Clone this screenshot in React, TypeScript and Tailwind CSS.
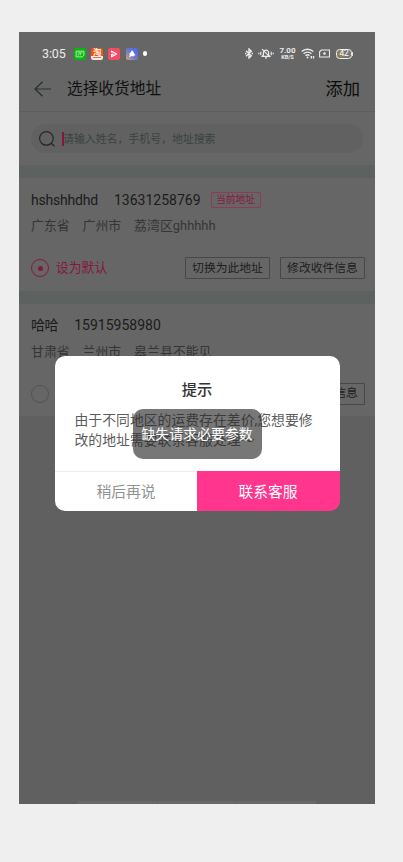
import type { ReactNode } from 'react';

type Address = {
  name: string;
  phone: string;
  region: string;
  current?: boolean;
  selected?: boolean;
};

const addresses: Address[] = [
  {
    name: 'hshshhdhd',
    phone: '13631258769',
    region: '广东省　广州市　荔湾区ghhhhh',
    current: true,
    selected: true,
  },
  {
    name: '哈哈',
    phone: '15915958980',
    region: '甘肃省　兰州市　皋兰县不能见',
  },
];

function StatusBar() {
  return (
    <div className="flex h-[43px] items-center pl-[23px] pr-[22px] text-[#ececec]">
      <span className="w-[32px] pt-px text-[12.5px] leading-none tracking-[-0.1px]">3:05</span>
      <div className="flex items-center gap-[5.2px]">
        <svg width="12" height="12" viewBox="0 0 12 12">
          <rect width="12" height="12" rx="2.2" fill="#08b80c" />
          <path d="M2.2 3.2h7.7v3.9L8.2 8.9H2.2z" fill="none" stroke="#d5f2d5" strokeWidth="0.8" />
          <path d="M3.7 4.9h4.8M3.7 6.9h1.3M6.2 5v2.4" stroke="#d5f2d5" strokeWidth="0.8" />
        </svg>
        <span className="flex h-3 w-3 flex-col items-center overflow-hidden rounded-[2.2px] bg-[#f4510b]">
          <span className="h-[8px] text-[8.5px] font-bold leading-[8px] text-[#fff3e8]">淘</span>
          <span className="flex h-[4px] w-full items-center justify-center bg-[#f8e6e0]">
            <span className="h-[1.5px] w-[8px] bg-[#e76a78]" />
          </span>
        </span>
        <svg width="12" height="12" viewBox="0 0 12 12">
          <rect width="12" height="12" rx="2.2" fill="#f34c63" />
          <path d="M3.6 4.4V3.2L8.6 6 3.6 8.8V6.6L5.6 6" fill="none" stroke="#fff" strokeWidth="1.2" strokeLinejoin="round" />
        </svg>
        <svg width="12" height="12" viewBox="0 0 12 12">
          <defs>
            <linearGradient id="petal" x1="0" y1="1" x2="1" y2="0">
              <stop offset="0" stopColor="#d9a37c" />
              <stop offset="0.45" stopColor="#7179c8" />
              <stop offset="1" stopColor="#4668ee" />
            </linearGradient>
          </defs>
          <rect width="12" height="12" rx="2.2" fill="url(#petal)" />
          <path d="M5.8 2.2 7.4 3.8 8.2 5.4 9.6 7.2 8 7.4 7.6 8.6 6 7.9 3 9.2 3.8 7 3.4 5 4.8 4.4z" fill="#fff" />
        </svg>
        <span className="h-[4.5px] w-[4.5px] rounded-full bg-white" />
      </div>
      <div className="ml-auto flex items-center">
        <svg width="8" height="11" viewBox="0 0 8 11" fill="none" stroke="currentColor" strokeWidth="1.4">
          <path d="M1 2.8 6.3 7.8 4 10V1l2.3 2.2L1 8.2" />
          <path d="M0 5.5h1.4M6.6 5.5H8" />
        </svg>
        <svg className="ml-[5px]" width="16" height="11" viewBox="0 0 16 11" fill="none" stroke="currentColor" strokeWidth="1.2">
          <path d="M4.3 8.3h7.4L10.6 7V4.8a2.6 2.6 0 0 0-5.2 0V7zM7 9.8h2M4 1.2l8 8M2.8 3.8v3.4M0.8 4.8v1.4M13.2 3.8v3.4M15.2 4.8v1.4" />
        </svg>
        <span className="ml-[5px] flex w-[17px] flex-col items-center font-bold">
          <span className="text-[8px] leading-[7px]">7.00</span>
          <span className="text-[5.6px] leading-[6px]">KB/S</span>
        </span>
        <svg className="ml-[5px]" width="14" height="11" viewBox="0 0 14 11" fill="none" stroke="currentColor" strokeWidth="1.4">
          <path d="M0.7 3.6a8.3 8.3 0 0 1 11.6 0M2.6 5.7a5.5 5.5 0 0 1 7.8 0M4.5 7.7a2.9 2.9 0 0 1 4 0" />
          <circle cx="6.5" cy="9.5" r="0.9" fill="currentColor" stroke="none" />
          <path d="M10.3 8v2.4M12.5 8v2.4" />
        </svg>
        <svg className="ml-[4px]" width="11" height="9" viewBox="0 0 11 9" fill="none" stroke="currentColor" strokeWidth="1.1">
          <path d="M2.3 1h8.2v7H0.6V2.8z" />
          <path d="M4.2 4.5h2.6M5.5 3.2v2.6" strokeWidth="1.3" />
        </svg>
        <span className="ml-[6px] flex h-[10px] w-[16px] items-center justify-center rounded-[3.5px] border border-[#ececec] bg-linear-to-r from-[#8c8059] from-45% to-[#777] to-45% text-[8.5px] leading-none tracking-[-0.3px] text-white">
          42
        </span>
        <span className="h-1 w-px bg-[#e0e0e0]" />
      </div>
    </div>
  );
}

function Header() {
  return (
    <header className="flex h-[37px] items-center border-b border-[#5c5f5f] pl-[15px] pr-[15px] pb-[9px]">
      <svg width="18" height="16" viewBox="0 0 18 16" fill="none" stroke="#263030" strokeWidth="1.2">
        <path d="M17 8H1M8.5 0.8 1 8l7.5 7.2" />
      </svg>
      <h1 className="ml-[15px] text-[15.7px] leading-none text-[#111]">选择收货地址</h1>
      <span className="ml-auto mt-[2px] text-[17.3px] leading-none text-[#0c0c0c]">添加</span>
    </header>
  );
}

function SearchBox() {
  return (
    <div className="h-[53px] px-3 pt-[12px]">
      <div className="flex h-[29px] items-center rounded-full bg-[#616161] pl-2">
        <svg width="16" height="16" viewBox="0 0 16 16" fill="none" stroke="#272727" strokeWidth="1.2">
          <circle cx="7.4" cy="7.4" r="6.8" />
          <path d="m12.2 12.2 3.3 3" />
        </svg>
        <span className="ml-[7px] h-[14px] w-[2px] bg-[#84173f]" />
        <span className="-ml-px pt-[3px] text-[10.9px] leading-none text-[#3a4142]">请输入姓名，手机号，地址搜索</span>
      </div>
    </div>
  );
}

function OutlineButton({ children }: { children: ReactNode }) {
  return (
    <span className="flex h-[22px] w-[85px] shrink-0 items-center justify-center rounded-[1px] border border-[#474747] pt-px text-[11.8px] leading-none text-[#1d1d1d]">
      {children}
    </span>
  );
}

function AddressCard({ address }: { address: Address }) {
  return (
    <div className="h-[112.5px] pl-3 pr-[10px] pt-[13px]">
      <div className="flex h-[18px] items-center text-[14px] text-[#1b1b1b]">
        <span className={address.selected ? 'tracking-[-0.2px]' : 'tracking-[-0.4px]'}>{address.name}</span>
        <span className="ml-4">{address.phone}</span>
        {address.current && (
          <span className="ml-[10px] flex h-4 w-[50px] items-center justify-center rounded-[2px] border border-[#8d3b56] text-[9.8px] leading-none text-[#87183e]">
            当前地址
          </span>
        )}
      </div>
      <div className="mt-[7px] h-[20px] whitespace-nowrap text-[12.9px] leading-[20px] text-[#353535]">{address.region}</div>
      <div className="mt-[21px] flex h-[22px] items-center">
        {address.selected ? (
          <>
            <span className="flex h-[18px] w-[18px] items-center justify-center rounded-full border-[1.5px] border-[#86173e]">
              <span className="h-[5px] w-[5px] rounded-full bg-[#86173e]" />
            </span>
            <span className="ml-[7px] pt-px text-[12.8px] leading-none text-[#86173e]">设为默认</span>
          </>
        ) : (
          <span className="h-[18px] w-[18px] rounded-full border border-[#505555]" />
        )}
        <div className="ml-auto flex gap-[10px]">
          <OutlineButton>切换为此地址</OutlineButton>
          <OutlineButton>修改收件信息</OutlineButton>
        </div>
      </div>
    </div>
  );
}

function Dialog() {
  return (
    <div className="absolute left-[36px] top-[324px] flex h-[155px] w-[285px] flex-col overflow-hidden rounded-[10px]">
      <div className="flex-1 bg-white">
        <h2 className="pt-[25px] pr-px text-center text-[15.3px] font-medium leading-[18px] text-[#333]">提示</h2>
        <p className="mt-[11px] whitespace-nowrap pl-[19.5px] text-[13.85px] leading-[20px] text-[#5c5c5c]">
          由于不同地区的运费存在差价,您想要修
          <br />
          改的地址需要联系客服处理～
        </p>
      </div>
      <div className="grid h-10 grid-cols-[142px_143px] text-[14.8px]">
        <span className="flex items-center justify-center border-t border-[#eee] bg-white pt-px text-[#929292]">稍后再说</span>
        <span className="flex items-center justify-center bg-[#ff358e] pt-[2px] pr-px text-white">联系客服</span>
      </div>
    </div>
  );
}

function Toast() {
  return (
    <div className="absolute left-[113.5px] top-[377px] flex h-[49.5px] w-[129px] items-center justify-center rounded-[10px] bg-[rgba(39,39,39,0.63)] pt-[2px] text-[13.9px] text-white">
      缺失请求必要参数
    </div>
  );
}

export default function App() {
  return (
    <div className="h-[862px] w-[403px] overflow-hidden bg-[#efefef] pl-[19px] pt-8 font-[Roboto,'Noto_Sans_CJK_SC',sans-serif]">
      <div className="relative flex h-[772px] w-[356px] flex-col bg-[#666]">
        <StatusBar />
        <Header />
        <SearchBox />
        {addresses.map((address) => (
          <div key={address.phone} className="border-t-[13px] border-[#5d6160]">
            <AddressCard address={address} />
          </div>
        ))}
        <div className="flex flex-1 items-end justify-center bg-[#606060]">
          <div className="flex gap-px">
            <span className="h-[3px] w-[79px] bg-[#686868]" />
            <span className="h-[3px] w-[78px] bg-[#686868]" />
            <span className="h-[3px] w-[79px] bg-[#686868]" />
          </div>
        </div>
        <Dialog />
        <Toast />
      </div>
    </div>
  );
}
